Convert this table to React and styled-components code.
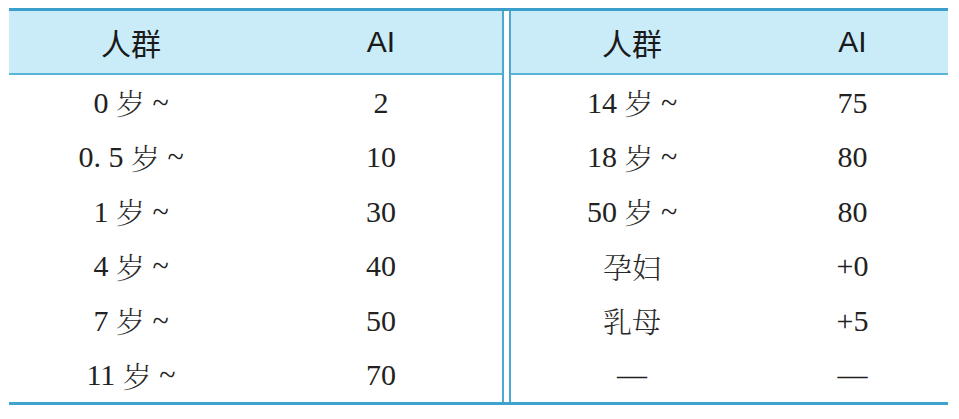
import React from "react";
import styled, { createGlobalStyle } from "styled-components";

const Global = createGlobalStyle`
  html, body { margin: 0; padding: 0; background: #ffffff; }
  body { font-family: 'Liberation Serif', serif; color: #1e1e1e; }
`;

const Page = styled.div`
  padding: 8px 11px 0 9px;
`;

const Table = styled.div`
  display: flex;
  gap: 5px;
  border-top: 3px solid #3b9ecb;
  border-bottom: 3px solid #3ea3cf;
  width: 939px;
`;

const Half = styled.div`
  display: grid;
  grid-template-columns: ${(p) => p.$cols};
  grid-template-rows: 64px repeat(6, 54.5px);
  border-left: ${(p) => (p.$side === "right" ? "2px solid #4aaad3" : "none")};
  border-right: ${(p) => (p.$side === "left" ? "2px solid #4aaad3" : "none")};
  flex: ${(p) => p.$grow};
  box-sizing: border-box;
`;

const HeadCell = styled.div`
  display: flex;
  align-items: center;
  justify-content: center;
  background: #c9ecf8;
  border-bottom: 2px solid #5ab4da;
  font-family: 'Liberation Sans', 'Noto Sans CJK SC', sans-serif;
  font-size: 30px;
  color: #1a1a1a;
  padding-left: ${(p) => p.$shift || 0}px;
  padding-bottom: 1px;
`;

const Cell = styled.div`
  display: flex;
  align-items: center;
  justify-content: center;
  font-family: 'Liberation Serif', serif;
  font-size: 30px;
  color: #222;
  padding-left: ${(p) => p.$shift || 0}px;
  padding-top: 1px;
  white-space: pre;
`;

const Cjk = styled.span`
  font-family: 'Noto Serif CJK SC', 'Noto Serif SC', 'AR PL UMing CN', 'Noto Sans CJK SC', serif;
  font-weight: 300;
  font-size: 29px;
  color: #2a2a2a;
`;

const renderText = (t) =>
  t.split(/([\u4e00-\u9fff]+)/).map((part, i) =>
    /[\u4e00-\u9fff]/.test(part) ? <Cjk key={i}>{part}</Cjk> : part
  );

const left = [
  ["0 岁 ~", "2"],
  ["0. 5 岁 ~", "10"],
  ["1 岁 ~", "30"],
  ["4 岁 ~", "40"],
  ["7 岁 ~", "50"],
  ["11 岁 ~", "70"],
];

const right = [
  ["14 岁 ~", "75"],
  ["18 岁 ~", "80"],
  ["50 岁 ~", "80"],
  ["孕妇", "+0"],
  ["乳母", "+5"],
  ["—", "—"],
];

const HalfTable = ({ side, cols, grow, shift, rows }) => (
  <Half $side={side} $cols={cols} $grow={grow}>
    <HeadCell>人群</HeadCell>
    <HeadCell $shift={shift}>AI</HeadCell>
    {rows.map(([a, b], i) => (
      <React.Fragment key={i}>
        <Cell>{renderText(a)}</Cell>
        <Cell $shift={shift}>{b}</Cell>
      </React.Fragment>
    ))}
  </Half>
);

export default function App() {
  return (
    <>
      <Global />
      <Page>
        <Table>
          <HalfTable side="left" cols="244px 1fr" grow="0 0 495px" shift={7} rows={left} />
          <HalfTable side="right" cols="242px 1fr" grow="1 1 auto" shift={4} rows={right} />
        </Table>
      </Page>
    </>
  );
}
